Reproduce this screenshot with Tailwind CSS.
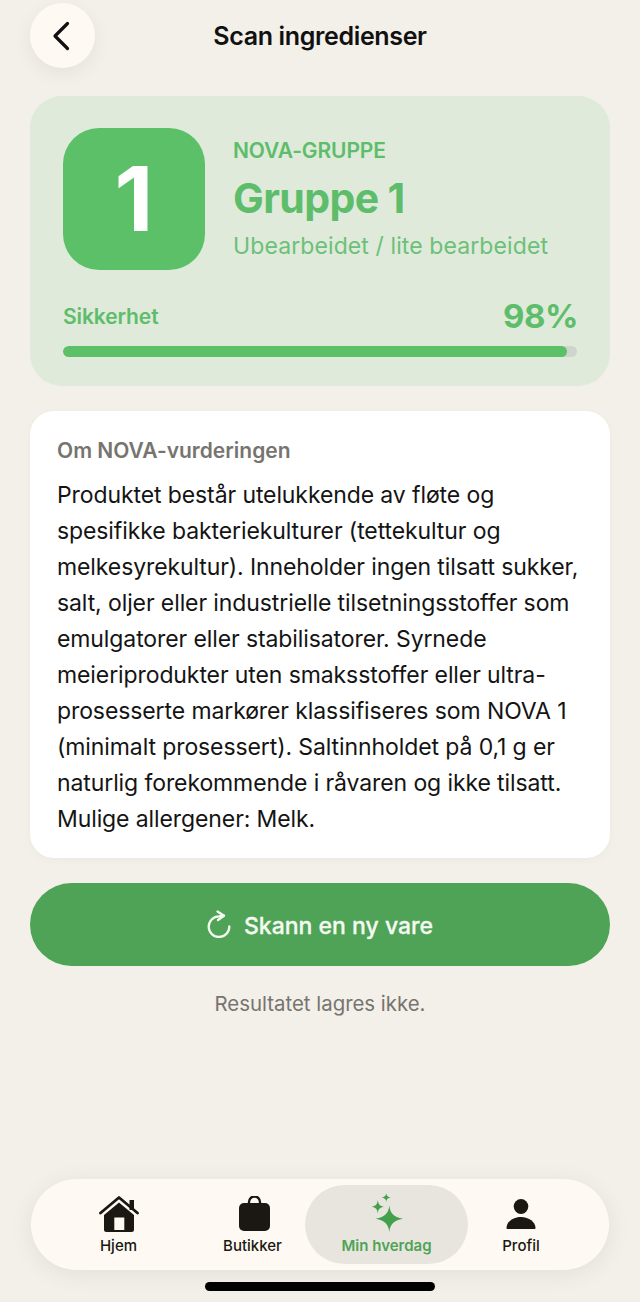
<!DOCTYPE html>
<html lang="en">
<head>
  <meta charset="UTF-8" />
  <title>Scan ingredienser</title>
  <script src="https://cdn.jsdelivr.net/npm/@tailwindcss/browser@4"></script>
</head>
<body class="bg-[#f3efe9] font-['Inter',sans-serif]">
  <div class="w-[640px] h-[1302px] overflow-hidden relative flex flex-col px-[30px] pt-[3px]">

    <!-- header -->
    <div class="relative flex items-center h-[65px] shrink-0">
      <div class="w-[65px] h-[65px] rounded-full bg-[#fefaf3] shadow-[0_6px_20px_rgba(0,0,0,0.06)] flex items-center justify-center">
        <svg width="20" height="30" viewBox="0 0 20 30" fill="none" stroke="#111" stroke-width="3.2" stroke-linecap="round" stroke-linejoin="round" class="mr-[4px]"><path d="M16.500 2.500 4 15l12.500 12.500"/></svg>
      </div>
      <div class="absolute inset-x-0 top-[1px] h-[65px] flex items-center justify-center text-[25px] font-semibold text-[#111] tracking-[-0.35px]">Scan ingredienser</div>
    </div>

    <!-- result card -->
    <div class="mt-[28px] h-[290px] shrink-0 rounded-[32px] bg-[#dfeadb] px-[33px] pt-[32px]">
      <div class="flex">
        <div class="w-[142px] h-[142px] rounded-[36px] bg-[#5cc068] flex items-center justify-center text-white text-[90px] font-bold leading-none">1</div>
        <div class="ml-[28px] pt-[11px]">
          <div class="text-[21px] leading-[24px] font-semibold text-[#5ebd6a] tracking-[-0.1px]">NOVA-GRUPPE</div>
          <div class="mt-[12px] text-[41px] leading-[46px] font-bold text-[#5ebd6a] tracking-[-0.6px]">Gruppe 1</div>
          <div class="mt-[11px] text-[23px] leading-[28px] text-[#6cc077] tracking-[0.1px]">Ubearbeidet / lite bearbeidet</div>
        </div>
      </div>
      <div class="mt-[29px] flex items-center justify-between h-[36px]">
        <span class="text-[21px] font-semibold text-[#5ebd6a] tracking-[-0.1px]">Sikkerhet</span>
        <span class="text-[33px] font-bold text-[#5ebd6a] tracking-[-0.5px] mr-[-1px]">98%</span>
      </div>
      <div class="mt-[11px] h-[11px] rounded-full bg-[#cfd4cc] overflow-hidden">
        <div class="h-full rounded-full bg-[#5cc068]" style="width:98%"></div>
      </div>
    </div>

    <!-- description -->
    <div class="mt-[25px] h-[447px] shrink-0 rounded-[24px] bg-white px-[27px] pt-[27px] shadow-[0_2px_10px_rgba(0,0,0,0.03)]">
      <div class="text-[21px] leading-[26px] font-semibold text-[#77746f]">Om NOVA-vurderingen</div>
      <p class="mt-[13px] text-[23px] leading-[36px] text-[#141414] tracking-[-0.1px]">Produktet består utelukkende av fløte og<br>spesifikke bakteriekulturer (tettekultur og<br>melkesyrekultur). Inneholder ingen tilsatt sukker,<br>salt, oljer eller industrielle tilsetningsstoffer som<br>emulgatorer eller stabilisatorer. Syrnede<br>meieriprodukter uten smaksstoffer eller ultra-<br>prosesserte markører klassifiseres som NOVA 1<br>(minimalt prosessert). Saltinnholdet på 0,1 g er<br>naturlig forekommende i råvaren og ikke tilsatt.<br>Mulige allergener: Melk.</p>
    </div>

    <!-- button -->
    <div class="mt-[25px] h-[83px] shrink-0 rounded-full bg-[#4ea356] flex items-center justify-center gap-[13px] text-[#f4faf1]">
      <svg width="24" height="28" viewBox="0 0 24 28" fill="none" stroke="currentColor" stroke-width="2.300" stroke-linecap="round" stroke-linejoin="round" class="mt-[-1px]"><path d="M17 5.700Q14 5.700 12 6.400A10.300 10.300 0 1 0 22.300 16.500"/><path d="M10.500 1.500 17 5.700 11 10"/></svg>
      <span class="text-[23px] font-medium pt-[4px] [-webkit-text-stroke:0.3px_#f4faf1]">Skann en ny vare</span>
    </div>

    <div class="mt-[25px] text-center text-[20.400px] leading-[26px] text-[#77746f]">Resultatet lagres ikke.</div>

    <!-- bottom nav -->
    <div class="absolute left-[31px] top-[1179px] w-[578px] h-[91px] rounded-[46px] bg-[#fefaf3] shadow-[0_4px_24px_rgba(0,0,0,0.07)] flex items-start pl-[6px] pt-[6px]">
      <div class="w-[163px] flex flex-col items-center pt-[11px]">
        <svg width="40" height="36" viewBox="0 0 40 36" class="ml-[1px]"><path d="M1.500 17 20 1.500 38.500 17" fill="none" stroke="#1b1712" stroke-width="2.800" stroke-linecap="round" stroke-linejoin="round"/><rect x="30.500" y="4" width="4.500" height="10" fill="#1b1712"/><path fill-rule="evenodd" d="M5 19 20 6.500 35 19v14.500a2.500 2.500 0 0 1-2.500 2.500h-25A2.500 2.500 0 0 1 5 33.500ZM15.300 21.500v12.500h10V21.500Z" fill="#1b1712"/></svg>
        <span class="mt-[4px] text-[15px] leading-[20px] font-medium text-[#1b1712]">Hjem</span>
      </div>
      <div class="w-[105px] flex flex-col items-center pt-[11px]">
        <svg width="31" height="36" viewBox="0 0 31 36" class="ml-[3px]"><path d="M10 8V6a5.500 5.500 0 0 1 11 0v2" fill="none" stroke="#1b1712" stroke-width="2.400"/><rect x="0" y="7" width="31" height="28" rx="5" fill="#1b1712"/></svg>
        <span class="mt-[4px] text-[15px] leading-[20px] font-medium text-[#1b1712]">Butikker</span>
      </div>
      <div class="w-[163px] h-[79px] rounded-[40px] bg-[#e8e5df] flex flex-col items-center pt-[8px]">
        <svg width="33" height="39" viewBox="0 0 33 39" fill="#43a04b" class="ml-[2px]"><path d="M18.300 12.200c.8 8 4 11.500 13.700 13.500-9.700 2-12.900 5.500-13.700 13.500-.8-8-4-11.500-13.700-13.500 9.700-2 12.900-5.500 13.700-13.500Z"/><path d="M6.800 7c.5 4.500 2 6 6.500 6.700-4.500.7-6 2.200-6.500 6.700-.5-4.500-2-6-6.500-6.700 4.500-.7 6-2.200 6.500-6.700Z"/><path d="M15.200 0c.3 2.800 1.300 3.900 4.700 4.500-3.400.6-4.400 1.700-4.700 4.500-.3-2.800-1.300-3.900-4.700-4.500 3.400-.6 4.400-1.700 4.700-4.500Z"/></svg>
        <span class="mt-[4px] text-[15px] leading-[20px] font-semibold text-[#4ea356]">Min hverdag</span>
      </div>
      <div class="w-[106px] flex flex-col items-center pt-[11px]">
        <svg width="30" height="36" viewBox="0 0 30 36" fill="#1b1712"><ellipse cx="15" cy="10.500" rx="7.300" ry="7.500"/><path d="M.5 32c0-6 6.500-11 14.500-11s14.500 5 14.500 11c0 .6-.4 1-1 1h-27c-.6 0-1-.4-1-1Z"/></svg>
        <span class="mt-[4px] text-[15px] leading-[20px] font-medium text-[#1b1712]">Profil</span>
      </div>
    </div>

    <!-- home indicator -->
    <div class="absolute left-[205px] top-[1282px] w-[230px] h-[9px] rounded-full bg-black"></div>
  </div>
</body>
</html>
